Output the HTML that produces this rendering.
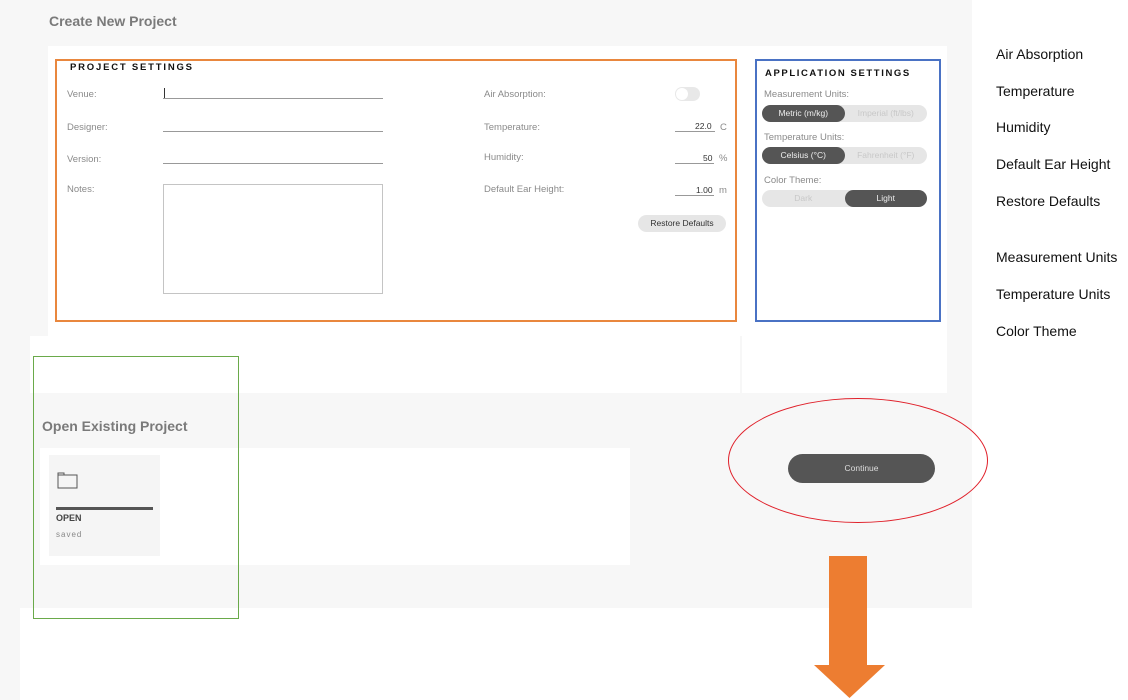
<!DOCTYPE html>
<html><head><meta charset="utf-8"><style>
*{margin:0;padding:0;box-sizing:border-box}
body{width:1128px;height:700px;position:relative;background:#fff;font-family:"Liberation Sans",sans-serif;overflow:hidden}
.a{position:absolute}
.lbl{font-size:9.5px;color:#8a8a8a}
.line{border-bottom:1px solid #999;height:1px}
.r{font-size:14px;color:#111;left:996px}
.seg{height:17px;border-radius:9px;background:#e6e6e6;font-size:8.5px;display:flex}
.seg div{flex:1;border-radius:9px;text-align:center;line-height:17px;color:#c8c8c8}
.seg .on{background:#555;color:#eee}
</style></head><body>
<div class="a" style="left:0;top:0;width:972px;height:608px;background:#f7f7f7"></div>
<div class="a" style="left:0;top:608px;width:20px;height:92px;background:#f7f7f7"></div>
<div class="a" style="left:49px;top:13px;font-size:14px;font-weight:bold;color:#7a7a7a">Create New Project</div>
<div class="a" style="left:48px;top:46px;width:694px;height:290px;background:#fff"></div>
<div class="a" style="left:30px;top:336px;width:710px;height:57px;background:#fff"></div>
<div class="a" style="left:742px;top:46px;width:205px;height:347px;background:#fff"></div>
<!-- project settings -->
<div class="a" style="left:55px;top:59px;width:682px;height:263px;border:2px solid #e9873e"></div>
<div class="a" style="left:70px;top:62px;font-size:9.5px;font-weight:bold;letter-spacing:1.8px;color:#111">PROJECT SETTINGS</div>
<div class="a lbl" style="left:67px;top:89px">Venue:</div>
<div class="a lbl" style="left:67px;top:122px">Designer:</div>
<div class="a lbl" style="left:67px;top:154px">Version:</div>
<div class="a lbl" style="left:67px;top:184px">Notes:</div>
<div class="a line" style="left:163px;top:98px;width:220px"></div>
<div class="a" style="left:164px;top:88px;width:1px;height:10px;background:#333"></div>
<div class="a line" style="left:163px;top:131px;width:220px"></div>
<div class="a line" style="left:163px;top:163px;width:220px"></div>
<div class="a" style="left:163px;top:184px;width:220px;height:110px;border:1px solid #c4c4c4"></div>
<div class="a lbl" style="left:484px;top:89px">Air Absorption:</div>
<div class="a lbl" style="left:484px;top:122px">Temperature:</div>
<div class="a lbl" style="left:484px;top:152px">Humidity:</div>
<div class="a lbl" style="left:484px;top:184px">Default Ear Height:</div>
<div class="a" style="left:675px;top:87px;width:25px;height:14px;border-radius:7px;background:#e8e8e8"><div style="width:12px;height:12px;margin:1px;border-radius:50%;background:#fff"></div></div>
<div class="a line" style="left:675px;top:131px;width:40px"></div><div class="a" style="left:695px;top:121px;font-size:8.5px;color:#333">22.0</div><div class="a lbl" style="left:720px;top:122px">C</div>
<div class="a line" style="left:675px;top:163px;width:39px"></div><div class="a" style="left:703px;top:153px;font-size:8.5px;color:#333">50</div><div class="a lbl" style="left:719px;top:153px">%</div>
<div class="a line" style="left:675px;top:195px;width:39px"></div><div class="a" style="left:696px;top:185px;font-size:8.5px;color:#333">1.00</div><div class="a lbl" style="left:719px;top:185px">m</div>
<div class="a" style="left:638px;top:215px;width:88px;height:17px;border-radius:9px;background:#e6e6e6;font-size:8.5px;color:#333;text-align:center;line-height:17px">Restore Defaults</div>
<!-- app settings -->
<div class="a" style="left:755px;top:59px;width:186px;height:263px;border:2px solid #4a72c4"></div>
<div class="a" style="left:765px;top:68px;font-size:9.5px;font-weight:bold;letter-spacing:1.6px;color:#111">APPLICATION SETTINGS</div>
<div class="a lbl" style="left:764px;top:89px">Measurement Units:</div>
<div class="a seg" style="left:762px;top:105px;width:165px"><div class="on">Metric (m/kg)</div><div>Imperial (ft/lbs)</div></div>
<div class="a lbl" style="left:764px;top:132px">Temperature Units:</div>
<div class="a seg" style="left:762px;top:147px;width:165px"><div class="on">Celsius (°C)</div><div>Fahrenheit (°F)</div></div>
<div class="a lbl" style="left:764px;top:175px">Color Theme:</div>
<div class="a seg" style="left:762px;top:190px;width:165px"><div>Dark</div><div class="on">Light</div></div>
<!-- open existing -->
<div class="a" style="left:42px;top:418px;font-size:14px;font-weight:bold;color:#7a7a7a">Open Existing Project</div>
<div class="a" style="left:40px;top:448px;width:590px;height:117px;background:#fff"></div>
<div class="a" style="left:49px;top:455px;width:111px;height:101px;background:#f5f5f5"></div>
<svg class="a" style="left:57px;top:472px" width="21" height="17" viewBox="0 0 21 17"><path d="M1 16V1h6v2h13v13z M1 3h6" fill="none" stroke="#555" stroke-width="1"/></svg>
<div class="a" style="left:56px;top:507px;width:97px;height:3px;background:#555"></div>
<div class="a" style="left:56px;top:513px;font-size:9px;font-weight:bold;color:#444">OPEN</div>
<div class="a" style="left:56px;top:530px;font-size:8px;color:#888;letter-spacing:1px">saved</div>
<div class="a" style="left:33px;top:356px;width:206px;height:263px;border:1.5px solid #6aaa4a"></div>
<!-- continue -->
<div class="a" style="left:728px;top:398px;width:260px;height:125px;border:1.5px solid #e0202a;border-radius:50%"></div>
<div class="a" style="left:788px;top:454px;width:147px;height:29px;border-radius:15px;background:#555;color:#ddd;font-size:8.5px;text-align:center;line-height:29px">Continue</div>
<div class="a" style="left:829px;top:556px;width:38px;height:110px;background:#ed7d31"></div>
<svg class="a" style="left:814px;top:665px" width="71" height="33"><polygon points="0,0 71,0 35.5,33" fill="#ed7d31"/></svg>
<!-- right notes -->
<div class="a r" style="top:46px">Air Absorption</div>
<div class="a r" style="top:83px">Temperature</div>
<div class="a r" style="top:119px">Humidity</div>
<div class="a r" style="top:156px">Default Ear Height</div>
<div class="a r" style="top:193px">Restore Defaults</div>
<div class="a r" style="top:249px">Measurement Units</div>
<div class="a r" style="top:286px">Temperature Units</div>
<div class="a r" style="top:323px">Color Theme</div>
</body></html>
